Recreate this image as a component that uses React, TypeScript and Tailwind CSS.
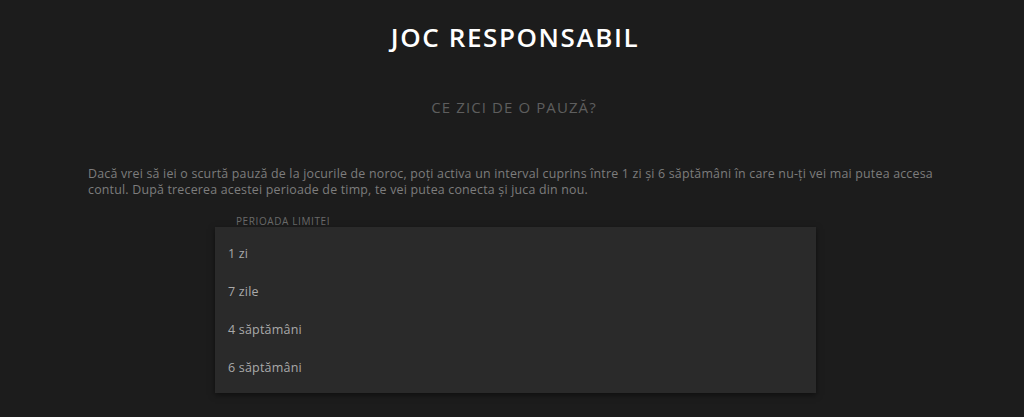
import React from "react";

export default function App() {
  const items = ["1 zi", "7 zile", "4 săptămâni", "6 săptămâni"];
  return (
    <div
      className="w-[1024px] h-[417px] bg-[#1c1c1c] overflow-hidden"
      style={{ fontFamily: '"Open Sans", "DejaVu Sans", sans-serif' }}
    >
      <div className="pt-[20px] text-center">
        <h1 className="text-[26px] leading-[34px] font-semibold text-white tracking-[1.6px] pl-[6px]">
          JOC RESPONSABIL
        </h1>
      </div>
      <div className="mt-[43px] text-center text-[15px] leading-[20px] text-[#5e5e5e] tracking-[1.1px] pl-[4px]">
        CE ZICI DE O PAUZĂ?
      </div>
      <div className="mx-[88px] mt-[49px] text-[12.4px] leading-[15.5px] text-[#7d7d7d] tracking-[0.2px]">
        Dacă vrei să iei o scurtă pauză de la jocurile de noroc, poți activa un interval cuprins între 1 zi și 6 săptămâni în care nu-ți vei mai putea accesa contul. După trecerea acestei perioade de timp, te vei putea conecta și juca din nou.
      </div>
      <div className="relative ml-[215px] mt-[18px] w-[601px]">
        <div className="pl-[21px] text-[10px] leading-[12px] text-[#6a6a6a] tracking-[0.6px]">
          PERIOADA LIMITEI
        </div>
        <div className="absolute left-0 top-[12px] w-[601px] h-[166px] bg-[#2a2a2a] shadow-[0_2px_6px_rgba(0,0,0,0.5)] pt-[8px]">
          {items.map((it) => (
            <div
              key={it}
              className="h-[38px] flex items-center pl-[13px] text-[12.5px] text-[#a9a9a9] font-medium tracking-[0.2px]"
            >
              {it}
            </div>
          ))}
        </div>
      </div>
    </div>
  );
}
